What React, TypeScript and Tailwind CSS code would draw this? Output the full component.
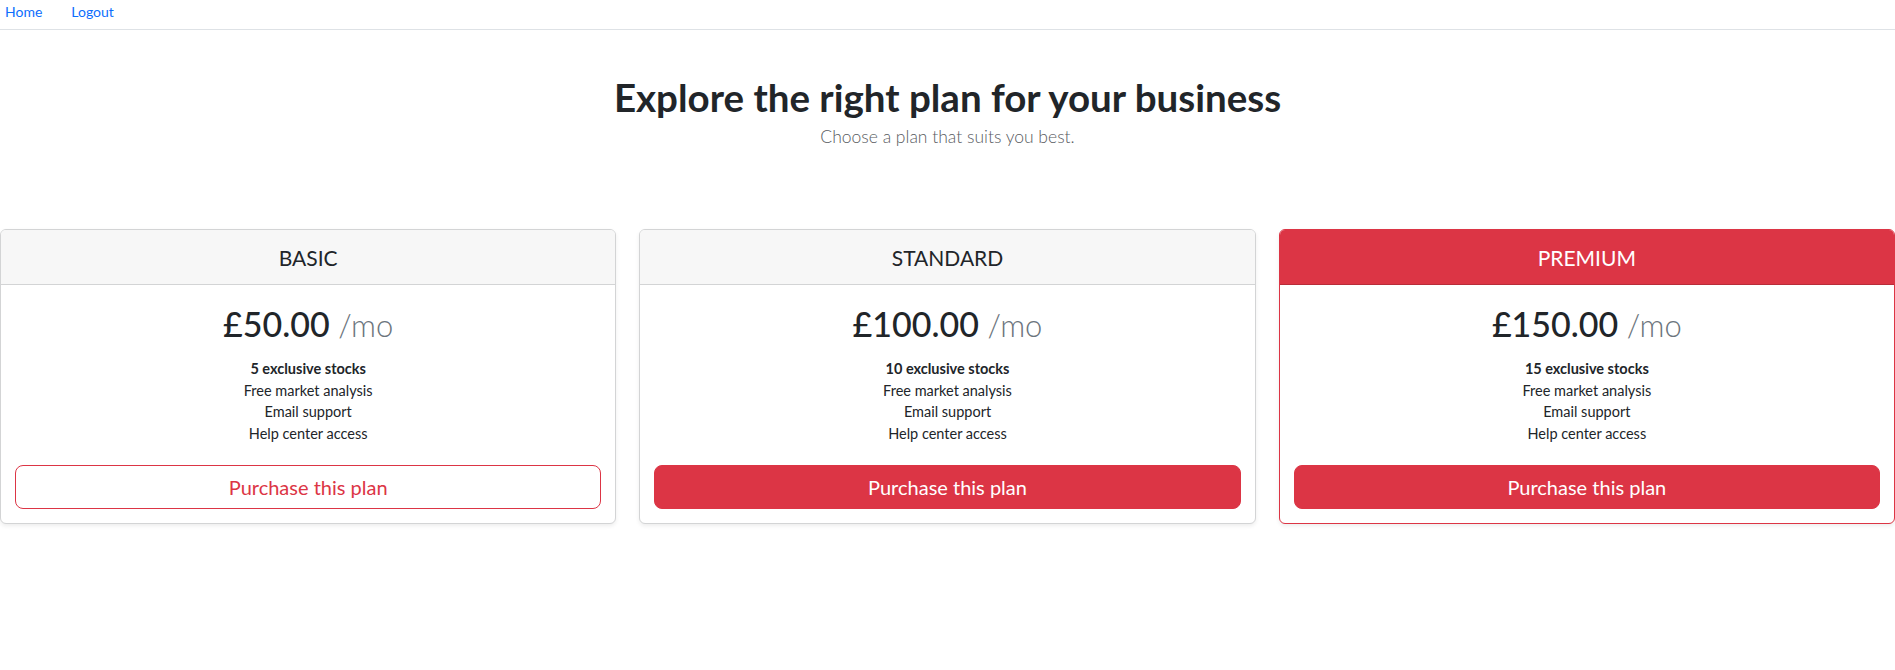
import React from 'react';

type Plan = {
    name: string;
    price: string;
    stocks: number;
    featured?: boolean;
    outline?: boolean;
};

const plans: Plan[] = [
    { name: 'BASIC', price: '£50.00', stocks: 5, outline: true },
    { name: 'STANDARD', price: '£100.00', stocks: 10 },
    { name: 'PREMIUM', price: '£150.00', stocks: 15, featured: true },
];

const PlanCard: React.FC<{ plan: Plan }> = ({ plan }) => {
    return (
        <div
            className={
                plan.featured
                    ? 'flex flex-col rounded-[6px] border border-[#dc3545] bg-white shadow-[0_2px_4px_rgba(0,0,0,0.075)]'
                    : 'flex flex-col rounded-[6px] border border-[#d3d4d5] bg-white shadow-[0_2px_4px_rgba(0,0,0,0.075)]'
            }
        >
            {/* Header */}
            <div
                className={
                    plan.featured
                        ? 'h-[55px] flex items-center justify-center rounded-t-[5px] bg-[#dc3545] border-b border-[#b82c39] text-white'
                        : 'h-[55px] flex items-center justify-center rounded-t-[5px] bg-[#f7f7f7] border-b border-[#d3d4d5] text-[#212529]'
                }
            >
                <h4 className="text-[21px] font-normal leading-none">{plan.name}</h4>
            </div>

            {/* Body */}
            <div className="px-[14px] pt-[19px] pb-[14px] text-center">
                <h1 className="text-[34px] leading-[40px] font-medium text-[#212529]">
                    {plan.price} <small className="text-[31px] font-light text-[#6c757d]">/mo</small>
                </h1>
                <ul className="mt-[13px] text-[14.5px] leading-[21.5px] text-[#212529]">
                    <li className="font-bold">{plan.stocks} exclusive stocks</li>
                    <li>Free market analysis</li>
                    <li>Email support</li>
                    <li>Help center access</li>
                </ul>
                <button
                    className={
                        plan.outline
                            ? 'mt-[21px] w-full h-[44px] rounded-[8px] border border-[#dc3545] bg-white text-[#dc3545] text-[20px]'
                            : 'mt-[21px] w-full h-[44px] rounded-[8px] border border-[#dc3545] bg-[#dc3545] text-white text-[20px]'
                    }
                >
                    Purchase this plan
                </button>
            </div>
        </div>
    );
};

const App: React.FC = () => {
    return (
        <div className="min-h-screen w-[1895px] overflow-hidden bg-white font-['Lato','Liberation_Sans',sans-serif] text-[#212529]">
            {/* Nav */}
            <nav className="h-[30px] border-b border-[#dee2e6] flex items-start pt-[1px] pl-[5px] gap-[29px] text-[14px] leading-[21px] text-[#0d6efd]">
                <a href="#">Home</a>
                <a href="#">Logout</a>
            </nav>

            {/* Title */}
            <div className="pt-[45px] text-center">
                <h1 className="text-[38.5px] leading-[44px] font-bold text-[#212529]">
                    Explore the right plan for your business
                </h1>
                <p className="mt-[4px] text-[17.5px] leading-[28px] font-light text-[#595c5f]">
                    Choose a plan that suits you best.
                </p>
            </div>

            {/* Cards */}
            <div className="mt-[78px] grid grid-cols-3 gap-[23px]">
                {plans.map((p) => (
                    <PlanCard key={p.name} plan={p} />
                ))}
            </div>
        </div>
    );
};

export default App;
